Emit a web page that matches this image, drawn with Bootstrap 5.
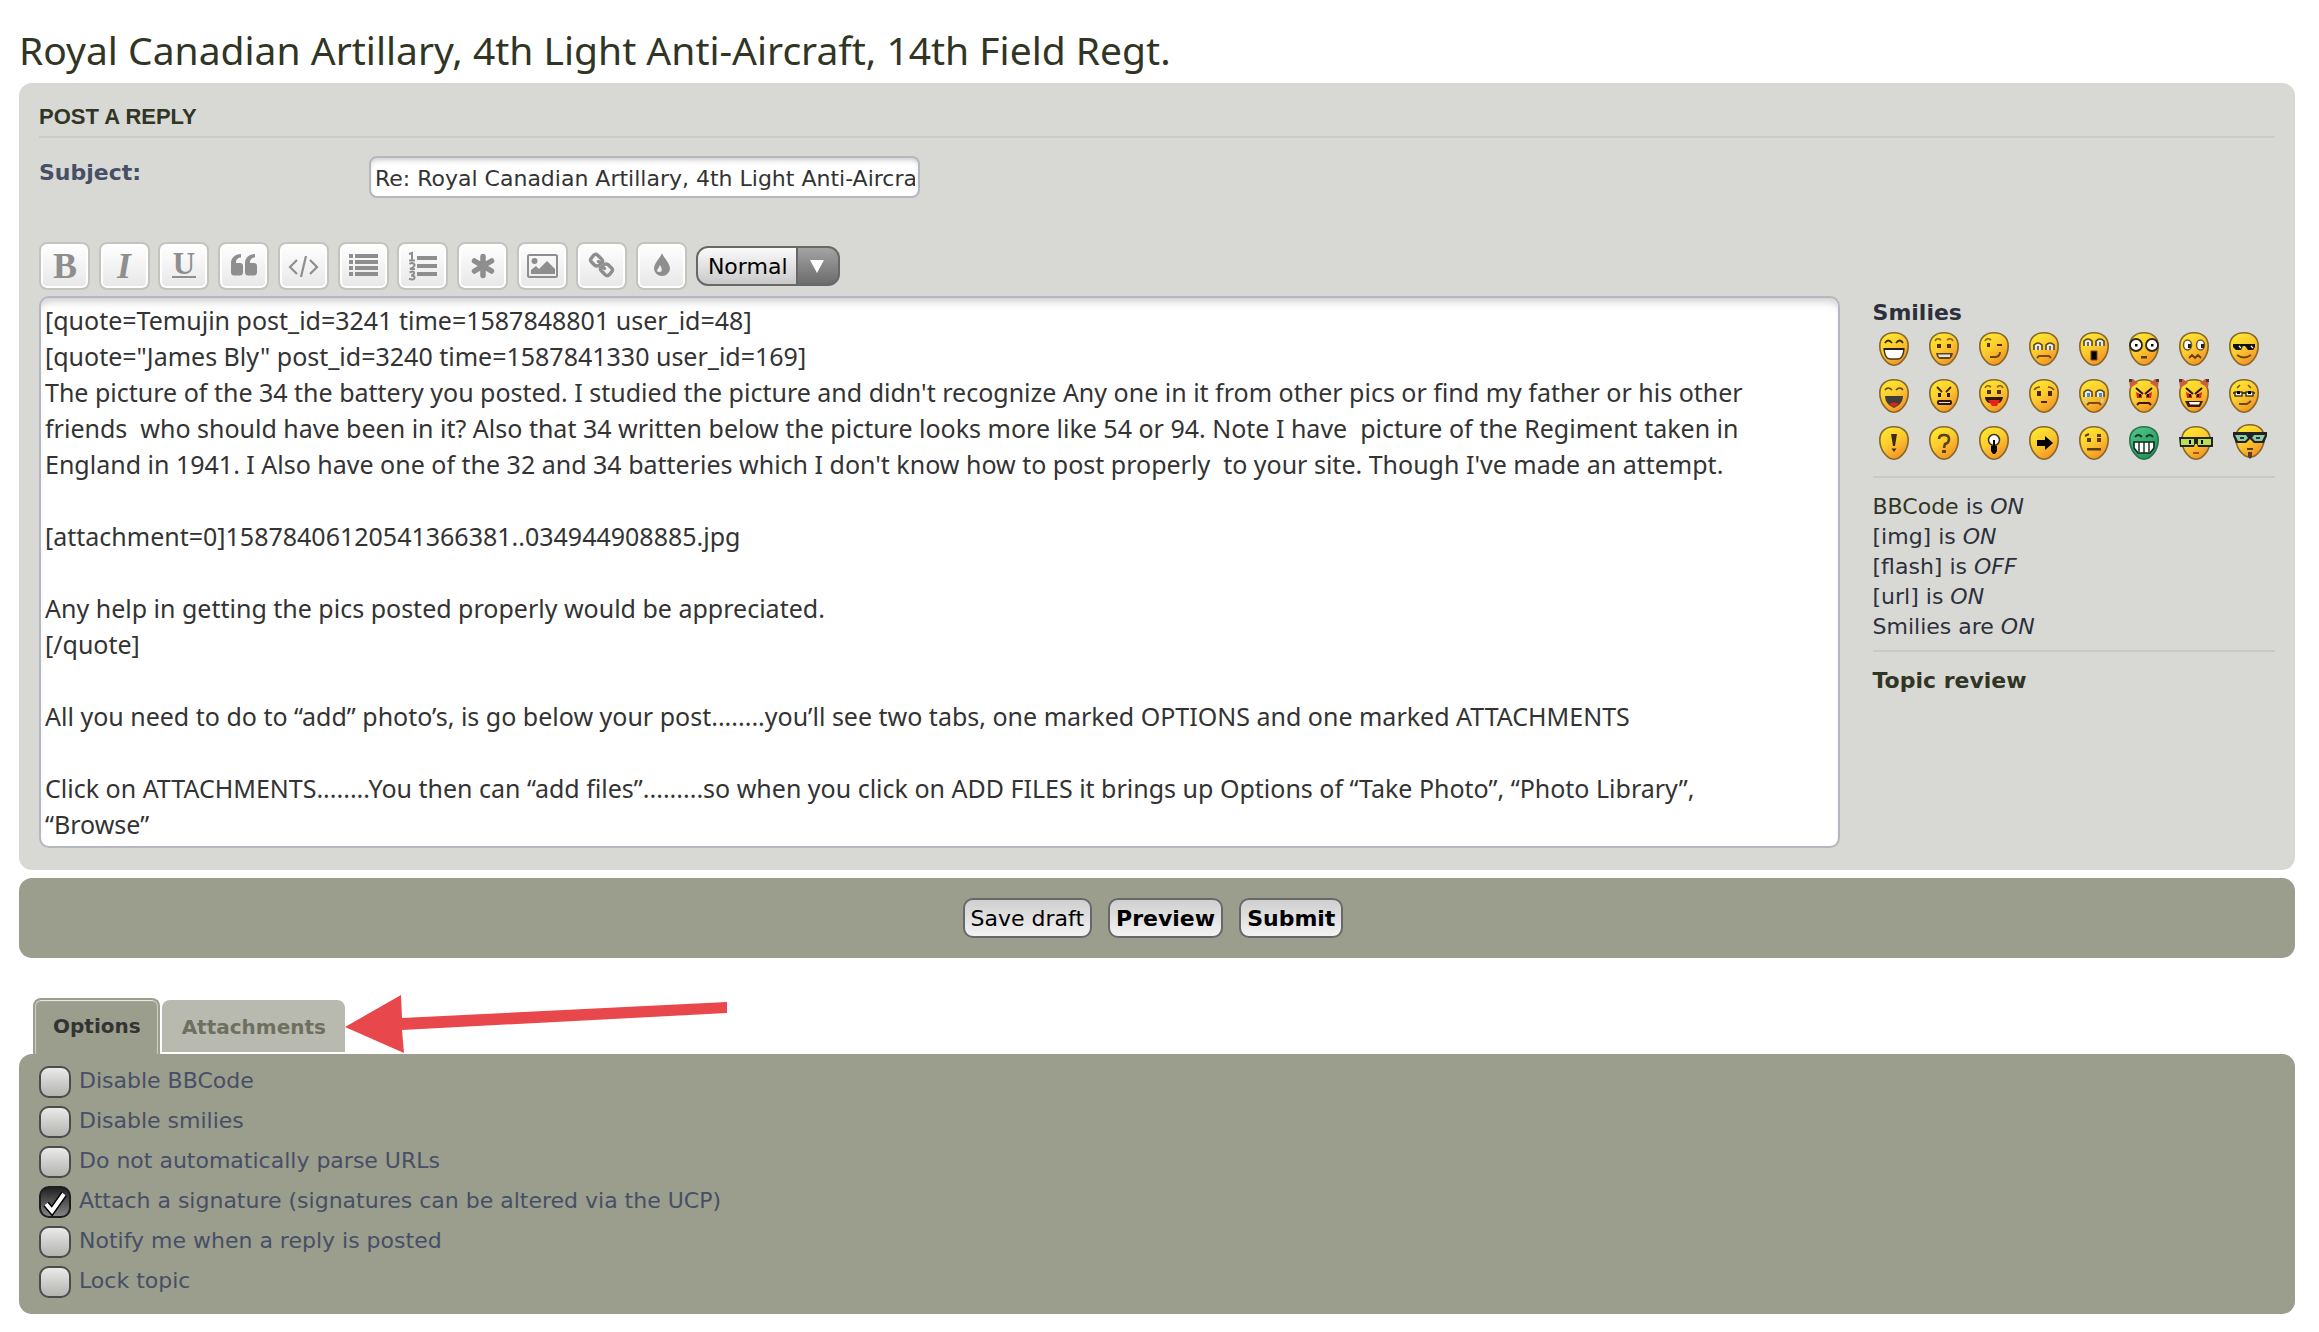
<!DOCTYPE html>
<html lang="en">
<head>
<meta charset="utf-8">
<meta name="viewport" content="width=device-width, initial-scale=1">
<title>Post a reply</title>
<link rel="stylesheet" href="https://cdn.jsdelivr.net/npm/bootstrap@5.3.0/dist/css/bootstrap.min.css">
<style>
:root{--verdana:Verdana,"DejaVu Sans",sans-serif;--treb:"Trebuchet MS","Noto Sans",sans-serif;--ink:#2c303c;--olive:#9b9d8d;--title:#313524}
body{background:#fff;color:var(--ink);font:22px/30px var(--verdana)}
.page-wrap{padding:17px 24px 18px 19px}
.topic-title{font:400 39px/66px var(--treb);color:var(--title);margin:0}
.post-panel{background:#d8d9d4;border-radius:13px;padding:0 20px 22px;margin-bottom:8px}
.post-panel h3{font:700 22px/39px Arial,"Liberation Sans",sans-serif;color:var(--title);padding-top:14px;margin:0 0 18px;border-bottom:2px solid #cccdca}
.subject-label{width:330px;line-height:34px;font-weight:700;color:#474f66}
.subject-box{width:551px;height:42px;font-size:22px;padding:2px 3px 0 4px;border:2px solid #b4b7bf;border-radius:8px;color:#333;box-shadow:inset 0 4px 5px -2px #c9c9c9}
.toolbar-row{max-width:801px;margin-top:44px}
.tool-btn{width:51px;height:48px;padding:0;border:2px solid #c4c3bf;border-radius:8px;background:linear-gradient(#fff,#e7e7e7);box-shadow:inset 0 0 0 2px #fff;color:#8e8e8e;overflow:hidden}
.tool-btn:hover{border-color:#999}
.tool-btn svg{display:block;margin:-2px;width:51px;height:48px;fill:currentColor}
.tool-btn text{font-family:"Liberation Serif",serif;font-weight:700}
.size-select{width:144px;height:40px;padding:2px 0 0 10px;font-size:22px;color:#000;appearance:none;border:2px solid #68686a;border-radius:12px;background:url("data:image/svg+xml,%3Csvg xmlns='http://www.w3.org/2000/svg' width='14' height='13'%3E%3Cpath d='M0 0h14L7 13z' fill='white'/%3E%3C/svg%3E") right 14px top 12px no-repeat,linear-gradient(#68686a,#68686a) right 40px top/2px 100% no-repeat,linear-gradient(#a3a3a3,#6c6c6c) right/41px 100% no-repeat,linear-gradient(#fbfbfb,#c9c9c9)}
.editor-row{margin-top:6px;gap:33px}
.msg-box{display:block;min-width:0;font:25px/36px var(--treb);color:#333;padding:4px 60px 4px 4px;border:2px solid #b4b7bf;border-radius:10px;resize:none;overflow:hidden;box-shadow:inset 0 8px 8px -5px #c9c9c9}
.side-col{flex:0 0 18%}
.side-col h4{font:700 22px/34px var(--verdana);margin:0 0 2px}
.side-col hr{margin:0;border-top:2px solid #c9cac8;opacity:1}
.side-col a{color:var(--title);text-decoration:none}
.smiley-list{gap:13px 20px;margin:0 0 16px 6px}
.smiley-list a,.smiley-list svg{display:block;width:30px;height:34px;overflow:visible}
.bb-status{padding:14px 0 8px}
.review-link{padding-top:14px}
.dark-panel{background:var(--olive);border-radius:13px}
.submit-bar{padding:20px 8px 20px 0;gap:16px}
.form-btn{height:40px;font-size:22px;line-height:36px;padding:1px 6px 0;color:#000;border:2px solid #68686a;border-radius:10px;background:linear-gradient(#cfcfcf,#f3f3f3)}
.tab-row{margin:40px 0 0;padding:0 14px;gap:2px;list-style:none}
.tab-row a{display:block;font-weight:700;font-size:20px;text-decoration:none;border-radius:8px 8px 0 0}
.tab-on a{height:56px;padding:0 19px 0 20px;line-height:54px;color:#333;background:linear-gradient(var(--olive),var(--olive)) padding-box,var(--olive);border:2px solid var(--olive);border-width:2px 2px 0;line-height:52px;padding:0 17px 0 18px;box-shadow:inset 0 2px 1px -1px #f0f1ee,inset 2px 0 1px -1px #d0d1ca,inset -2px 0 1px -1px #d0d1ca}
.tab-off{padding-top:2px}
.tab-off a{height:52px;padding:0 19px 0 20px;line-height:54px;color:#6e705f;background:#b8baaf}
.pointer-arrow{left:100%;top:-3px;width:383px;height:58px;pointer-events:none}
.options-list{padding:12px 20px 16px;gap:8px;color:#474f66;line-height:30px}
.opt-check{flex:none;width:32px;height:32px;margin:0;appearance:none;border:2px solid #4b4b49;border-radius:10px;background:linear-gradient(#eaeae9,#b3b4b0)}
.opt-check:checked{border-color:#1d1d1d;background:url("data:image/svg+xml,%3Csvg xmlns='http://www.w3.org/2000/svg' viewBox='0 0 28 28'%3E%3Cpath d='M5 16l6 7L23 6' fill='none' stroke='black' stroke-width='7'/%3E%3Cpath d='M5 16l6 7L23 6' fill='none' stroke='white' stroke-width='4'/%3E%3C/svg%3E") center/28px no-repeat,linear-gradient(#222,#858585)}
</style>
<script src="https://cdn.jsdelivr.net/npm/bootstrap@5.3.0/dist/js/bootstrap.bundle.min.js"></script>
</head>
<body>
<svg width="0" height="0" class="position-absolute" aria-hidden="true">
<defs>
<linearGradient id="skin" x1=".2" y1="0" x2=".8" y2="1"><stop offset="0" stop-color="#ffe92e"/><stop offset=".45" stop-color="#fccb2f"/><stop offset="1" stop-color="#f28a24"/></linearGradient>
<linearGradient id="greenskin" x1=".2" y1="0" x2=".8" y2="1"><stop offset="0" stop-color="#4fc48a"/><stop offset="1" stop-color="#1f8f56"/></linearGradient>
<path id="egg" d="M15 .8C24 .8 29.2 6 29.2 14 29.2 24 22 33.2 15 33.2S.8 24 .8 14C.8 6 6 .8 15 .8Z"/>
<g id="face"><use href="#egg" fill="url(#skin)" stroke="#85672c" stroke-width="1.6"/></g>
<g id="brows" fill="none" stroke="#8a5f10" stroke-width="1.6"><path d="M6 9q2-4 6-1M18 8q4-3 6 1"/></g>
<g id="horns"><path d="M0 0h4l5 4-8 5zM30 0h-4l-5 4 8 5z" fill="#c9603a"/><path d="M0 0h3v3H0zM27 0h3v3h-3z" fill="#4a3a38"/></g>
<g id="redeyes"><path d="M7 13l6 3v3H8zM23 13l-6 3v3h5z" fill="#e02312"/><path d="M7 9l7 6M23 9l-7 6" stroke="#2a1505" stroke-width="2"/><path d="M10 15h2v3h-2zM18 15h2v3h-2z"/></g>
<g id="sadeyes" fill="#e9e9e9" stroke="#54461f" stroke-width="1.6"><path d="M5 18v-5q4-4 8 0v5M17 18v-5q4-4 8 0v5"/><path d="M9 14v4M21 14v4"/></g>
</defs>
</svg>

<main class="page-wrap">
<h2 class="topic-title">Royal Canadian Artillary, 4th Light Anti-Aircraft, 14th Field Regt.</h2>
<form>
<section class="post-panel">
  <h3>POST A REPLY</h3>
  <div class="d-flex align-items-start">
    <label class="subject-label" for="subject">Subject:</label>
    <input class="subject-box" id="subject" type="text" value="Re: Royal Canadian Artillary, 4th Light Anti-Aircraft, 14th Field Regt.">
  </div>

  <div class="toolbar-row d-flex align-items-center justify-content-between">
    <button type="button" class="tool-btn" aria-label="Bold"><svg viewBox="0 0 51 48"><text x="26" y="36" text-anchor="middle" font-size="36">B</text></svg></button>
    <button type="button" class="tool-btn" aria-label="Italic"><svg viewBox="0 0 51 48"><text x="25" y="36" text-anchor="middle" font-size="36" font-style="italic">I</text></svg></button>
    <button type="button" class="tool-btn" aria-label="Underline"><svg viewBox="0 0 51 48"><text x="26" y="32" text-anchor="middle" font-size="31">U</text><path d="M14 34h24v2H14z"/></svg></button>
    <button type="button" class="tool-btn" aria-label="Quote"><svg viewBox="0 0 51 48"><path id="q" d="M23 12v3.500c-3 0-5 2-5 5V21h4q3 0 3 3v6q0 3.500-3 3.500h-6q-3 0-3-3.500V21c0-5 4-9 10-9Z"/><use href="#q" x="14"/></svg></button>
    <button type="button" class="tool-btn" aria-label="Code"><svg viewBox="0 0 51 48"><path d="M19 18l-7 7 7 7M32 18l7 7-7 7M28 14l-5 21" fill="none" stroke="currentColor" stroke-width="2.200"/></svg></button>
    <button type="button" class="tool-btn" aria-label="List"><svg viewBox="0 0 51 48"><path d="M11 12h4v4h-4zM17 12h23v4H17zM11 18h4v4h-4zM17 18h23v4H17zM11 24h4v4h-4zM17 24h23v4H17zM11 30h4v4h-4zM17 30h23v4H17z"/></svg></button>
    <button type="button" class="tool-btn" aria-label="Numbered list"><svg viewBox="0 0 51 48"><path d="M20 14h20v4H20zM20 22h20v4H20zM20 30h20v4H20z"/><path d="M12 12l3-1v7M12 18.500h6M12.500 22q2.500-2 4.500 0t-4 5h5M12.500 30.500q5-2 4.500.5t-3 2.500q4 0 3.500 2.500t-5.500.8" fill="none" stroke="currentColor" stroke-width="2"/></svg></button>
    <button type="button" class="tool-btn" aria-label="List item"><svg viewBox="0 0 51 48"><path d="M26 14.500v19M17.500 19l17 10M34.500 19l-17 10" stroke="currentColor" stroke-width="5.500" stroke-linecap="round"/></svg></button>
    <button type="button" class="tool-btn" aria-label="Image"><svg viewBox="0 0 51 48"><rect x="11" y="13" width="29" height="22" rx="1.500" fill="none" stroke="currentColor" stroke-width="2"/><circle cx="17.500" cy="19" r="3"/><path d="M14 32v-4l5-4 3 3 8-8 8 8v5z"/></svg></button>
    <button type="button" class="tool-btn" aria-label="Link"><svg viewBox="0 0 51 48"><g fill="none" stroke="currentColor" stroke-width="3.400" stroke-linecap="round"><path d="M22.500 23.500l-1.500.5q-1.500 0-2.500-1l-3-3q-2-2 0-4l2-2.500q2-2 4-.5l4 4q2 2 .5 4l-1 .5-2.500-2"/><path d="M28.500 22.500l1.500-.5q1.500 0 2.500 1l3 3q2 2 0 4l-2 2.500q-2 2-4 .5l-4-4q-2-2-.5-4l1-.5 2.500 2"/></g></svg></button>
    <button type="button" class="tool-btn" aria-label="Font colour"><svg viewBox="0 0 51 48"><path d="M26 11c1 4 8 10 8 15.500a8 7.500 0 0 1-16 0C18 21 25 15 26 11Z"/><path d="M24 23q4 7-.5 7t-1-4z" fill="#f0f0f0"/></svg></button>
    <select class="size-select" aria-label="Font size"><option>Tiny</option><option>Small</option><option selected>Normal</option><option>Large</option><option>Huge</option></select>
  </div>

  <div class="editor-row d-flex align-items-start">
<textarea class="msg-box flex-grow-1" rows="15" aria-label="Message" spellcheck="false">[quote=Temujin post_id=3241 time=1587848801 user_id=48]
[quote="James Bly" post_id=3240 time=1587841330 user_id=169]
The picture of the 34 the battery you posted. I studied the picture and didn't recognize Any one in it from other pics or find my father or his other friends  who should have been in it? Also that 34 written below the picture looks more like 54 or 94. Note I have  picture of the Regiment taken in England in 1941. I Also have one of the 32 and 34 batteries which I don't know how to post properly  to your site. Though I've made an attempt.

[attachment=0]15878406120541366381..034944908885.jpg

Any help in getting the pics posted properly would be appreciated.
[/quote]

All you need to do to “add” photo’s, is go below your post........you’ll see two tabs, one marked OPTIONS and one marked ATTACHMENTS

Click on ATTACHMENTS........You then can “add files”.........so when you click on ADD FILES it brings up Options of “Take Photo”, “Photo Library”, “Browse”</textarea>

    <aside class="side-col">
      <h4>Smilies</h4>
      <div class="smiley-list d-flex flex-wrap">
        <a href="#" aria-label="Very happy"><svg viewBox="0 0 30 34"><use href="#face"/><path d="M6 11q3-5 7 0M17 11q4-5 7 0" fill="none" stroke="#3a2a08" stroke-width="1.800"/><path d="M5 17h20q-1 10-6 10h-8q-5 0-6-10z" fill="#fff" stroke="#4a3510" stroke-width="1.500"/><path d="M5 17h20" stroke="#222" stroke-width="2"/></svg></a>
        <a href="#" aria-label="Smile"><svg viewBox="0 0 30 34"><use href="#face"/><use href="#brows"/><path d="M8 12h4v4H8zM18 12h4v4h-4z" fill="#4a3208"/><path d="M7 21h17q-1 6-5 6h-7q-4 0-5-6z" fill="#5a4620"/><path d="M9 22.500h12v2.500H10z" fill="#e8e4da"/></svg></a>
        <a href="#" aria-label="Wink"><svg viewBox="0 0 30 34"><use href="#face"/><path d="M6 9q2-4 6-1" fill="none" stroke="#8a5f10" stroke-width="1.600"/><path d="M8 11h3v4H8zM18 12h5v2h-5z" fill="#4a3208"/><path d="M11 25h6q4-1 4-5" fill="none" stroke="#6a4810" stroke-width="2"/></svg></a>
        <a href="#" aria-label="Sad"><svg viewBox="0 0 30 34"><use href="#face"/><use href="#sadeyes"/><path d="M8 26l2-2h10l2 2" fill="none" stroke="#7a4a10" stroke-width="2"/></svg></a>
        <a href="#" aria-label="Surprised"><svg viewBox="0 0 30 34"><use href="#face"/><g fill="#e9e9e9" stroke="#54461f" stroke-width="1.600"><path d="M5 14V9q4-4 8 0v5M17 14V9q4-4 8 0v5"/><path d="M9 10v4M21 10v4"/></g><path d="M12 19h6v9h-6z" stroke="#7a4a10"/></svg></a>
        <a href="#" aria-label="Shocked"><svg viewBox="0 0 30 34"><use href="#face"/><g fill="#fff" stroke="#2c2818" stroke-width="1.800"><circle cx="7" cy="13" r="6"/><circle cx="23" cy="13" r="6"/></g><path d="M6 12h2.500v2.500H6zM22 12h2.500v2.500H22z"/><path d="M12 24h6v2.500h-6z" fill="#5a3a08"/></svg></a>
        <a href="#" aria-label="Confused"><svg viewBox="0 0 30 34"><use href="#face"/><g fill="#fff" stroke="#6b5a30" stroke-width="1.500"><ellipse cx="8.500" cy="13" rx="4" ry="5"/><ellipse cx="21.500" cy="13" rx="4" ry="5"/></g><path d="M9 12h3v4H9zM22 12h3v4h-3z" fill="#222"/><path d="M10 26l3-3 3 3 3-3 3 3" fill="none" stroke="#6a3c08" stroke-width="1.800"/></svg></a>
        <a href="#" aria-label="Cool"><svg viewBox="0 0 30 34"><use href="#face"/><path d="M4 12h22v3l-2 3h-5l-3-4h-2l-2 4H7l-3-3z" fill="#111"/><path d="M10 14l2 2M22 14l2 2" stroke="#fff" stroke-width="1.300"/><path d="M8 23q7 5 14 0" fill="none" stroke="#6a4810" stroke-width="2"/></svg></a>

        <a href="#" aria-label="Laughing"><svg viewBox="0 0 30 34"><use href="#face"/><path d="M6 11q3-4 7 0M17 11q4-4 7 0" fill="none" stroke="#5a4510" stroke-width="1.600"/><path d="M6 17h18q0 5-4 9l-5 3-5-3q-4-4-4-9z" fill="#403c3a"/><path d="M10 25q5-3 10 0l-5 3z" fill="#e0231a"/></svg></a>
        <a href="#" aria-label="Mad"><svg viewBox="0 0 30 34"><use href="#face"/><path d="M8 8l5 5M22 8l-5 5" stroke="#4a2a05" stroke-width="1.800"/><path d="M9 14h3v4H9zM18 14h3v4h-3z" fill="#2a1a05"/><rect x="9" y="22" width="13" height="3" rx="1" fill="#e9e2d6" stroke="#2a1a05" stroke-width="2"/></svg></a>
        <a href="#" aria-label="Razz"><svg viewBox="0 0 30 34"><use href="#face"/><use href="#brows"/><path d="M8 11h4v4H8zM18 11h4v4h-4z" fill="#4a3208"/><path d="M6 18h18q-1 5-4 6H10q-4-2-4-6z" fill="#2a1a10"/><path d="M9 21h12l-3 6h-5z" fill="#e4241a"/></svg></a>
        <a href="#" aria-label="Embarrassed"><svg viewBox="0 0 30 34"><use href="#face"/><path d="M5 11q2-3 6-3M19 8q4 0 6 3" fill="none" stroke="#8a5010" stroke-width="1.600"/><path d="M8 12h4v5H8zM19 12h4v5h-4zM12 22h6v2h-6z" fill="#4a2608"/></svg></a>
        <a href="#" aria-label="Crying"><svg viewBox="0 0 30 34"><use href="#face"/><use href="#sadeyes"/><path d="M8 14h3v4H8zM20 14h3v4h-3z" fill="#4a8fb8"/><path d="M5 20h3v4H6zM22 20h3l-1 4h-2z" fill="#c9cfa8"/><path d="M8 26l2-2h10l2 2" fill="none" stroke="#7a4a10" stroke-width="2"/></svg></a>
        <a href="#" aria-label="Evil"><svg viewBox="0 0 30 34"><use href="#face"/><use href="#horns"/><use href="#redeyes"/><path d="M8 26l2-2h10l2 2" fill="none" stroke="#3a1a05" stroke-width="2"/></svg></a>
        <a href="#" aria-label="Twisted"><svg viewBox="0 0 30 34"><use href="#face"/><use href="#horns"/><use href="#redeyes"/><path d="M6 22h18l-3 6H9z" fill="#3a1a05"/><path d="M10 23h11l-1 2.500h-9z" fill="#fff"/></svg></a>
        <a href="#" aria-label="Rolling eyes"><svg viewBox="0 0 30 34"><use href="#face"/><path d="M8 9l3-3M19 6l3 3" stroke="#7a5510" stroke-width="1.600"/><path d="M4 14h22" stroke="#4a4020" stroke-width="2"/><g fill="#f2f2f2" stroke="#3a3420" stroke-width="1.400"><rect x="6" y="13" width="7" height="4"/><rect x="17" y="13" width="7" height="4"/></g><path d="M8 12h3v3H8zM19 12h3v3h-3z"/><path d="M10 25h8l4-3" fill="none" stroke="#6a4810" stroke-width="2"/></svg></a>

        <a href="#" aria-label="Exclamation"><svg viewBox="0 0 30 34"><use href="#face"/><path d="M12 8h6l-2 12h-2zM12.500 22.500h5L15 26z" fill="#3c2c0c"/></svg></a>
        <a href="#" aria-label="Question"><svg viewBox="0 0 30 34"><use href="#face"/><path d="M10 13q0-4 5-4t5 4-4 5l-1 4" fill="none" stroke="#5a430e" stroke-width="2.600"/><path d="M13 24h4v3h-4z" fill="#5a430e"/></svg></a>
        <a href="#" aria-label="Idea"><svg viewBox="0 0 30 34"><use href="#face"/><circle cx="15" cy="14" r="5.500" fill="#fff" stroke="#3a2c10" stroke-width="1.500"/><path d="M14 14h2v7h-2zM12 20h6v5l-2 3h-2l-2-3z"/></svg></a>
        <a href="#" aria-label="Arrow"><svg viewBox="0 0 30 34"><use href="#face"/><path d="M8 14h8v-4l8 7-8 7v-4H8z"/></svg></a>
        <a href="#" aria-label="Neutral"><svg viewBox="0 0 30 34"><use href="#face"/><path d="M6 10l4-2" stroke="#5a3c08" stroke-width="2"/><path d="M8 12h4v4H8zM18 8h4v3h-4zM18 12h4v4h-4zM8 22h14v2.500H8z" fill="#5a3c08"/></svg></a>
        <a href="#" aria-label="Mr. Green"><svg viewBox="0 0 30 34"><use href="#egg" fill="url(#greenskin)" stroke="#27744c" stroke-width="1.600"/><path d="M6 11q3-4 7 0M17 11q4-4 7 0" fill="none" stroke="#0c3a22" stroke-width="1.800"/><path d="M5 16h20v6l-4 5H9l-4-5z" fill="#fff" stroke="#0c2a1a" stroke-width="1.600"/><path d="M10 16v10M15 16v11M20 16v10" stroke="#0c2a1a" stroke-width="1.400"/></svg></a>
        <a href="#" aria-label="Geek"><svg viewBox="0 0 30 34"><use href="#face" x="2"/><path d="M0 11h34v10H19l-1-3h-2l-1 3H1z" fill="#222"/><path d="M2 13h13v6H2zM19 13h13v6H19z" fill="#b4e05a"/><path d="M10 14h2v4h-2zM22 14h2v4h-2z"/><path d="M14 26h6v2h-6z" fill="#a05a10"/></svg></a>
        <a href="#" aria-label="Uber geek"><svg viewBox="-4 2 30 34"><use href="#face" x="2"/><path d="M0 8h34v4l-3 7H21l-4-4-4 4H3l-3-7z" fill="#222"/><path d="M2 11h11l2 3-3 3H5zM32 11H21l-2 3 3 3h7z" fill="#8ccba6"/><path d="M7 13h4v2H7zM23 13h4v2h-4z" fill="#333"/><path d="M14 24h6v2h-6zM15 28h4v5l-2 2-2-2z" fill="#5a4020"/></svg></a>
      </div>
      <hr>
      <div class="bb-status">
        <div><a href="#">BBCode</a> is <em>ON</em></div>
        <div>[img] is <em>ON</em></div>
        <div>[flash] is <em>OFF</em></div>
        <div>[url] is <em>ON</em></div>
        <div>Smilies are <em>ON</em></div>
      </div>
      <hr>
      <div class="review-link"><a href="#" class="fw-bold">Topic review</a></div>
    </aside>
  </div>
</section>

<section class="dark-panel submit-bar d-flex justify-content-center">
  <button type="button" class="form-btn">Save draft</button>
  <button type="button" class="form-btn fw-bold">Preview</button>
  <button type="button" class="form-btn fw-bold">Submit</button>
</section>

<ul class="tab-row d-flex align-items-start">
  <li class="tab-on"><a href="#options">Options</a></li>
  <li class="tab-off position-relative"><a href="#attachments">Attachments</a>
    <svg class="pointer-arrow position-absolute" viewBox="0 0 383 58" aria-hidden="true"><path d="M0 32L56 0l1 23 325-16v11L57 35l2 23z" fill="#e8474b"/></svg>
  </li>
</ul>

<section class="dark-panel options-list d-flex flex-column" id="options">
  <div class="d-flex gap-2"><input class="opt-check" type="checkbox" id="o1"><label for="o1">Disable BBCode</label></div>
  <div class="d-flex gap-2"><input class="opt-check" type="checkbox" id="o2"><label for="o2">Disable smilies</label></div>
  <div class="d-flex gap-2"><input class="opt-check" type="checkbox" id="o3"><label for="o3">Do not automatically parse URLs</label></div>
  <div class="d-flex gap-2"><input class="opt-check" type="checkbox" id="o4" checked><label for="o4">Attach a signature (signatures can be altered via the UCP)</label></div>
  <div class="d-flex gap-2"><input class="opt-check" type="checkbox" id="o5"><label for="o5">Notify me when a reply is posted</label></div>
  <div class="d-flex gap-2"><input class="opt-check" type="checkbox" id="o6"><label for="o6">Lock topic</label></div>
</section>
</form>
</main>
</body>
</html>
